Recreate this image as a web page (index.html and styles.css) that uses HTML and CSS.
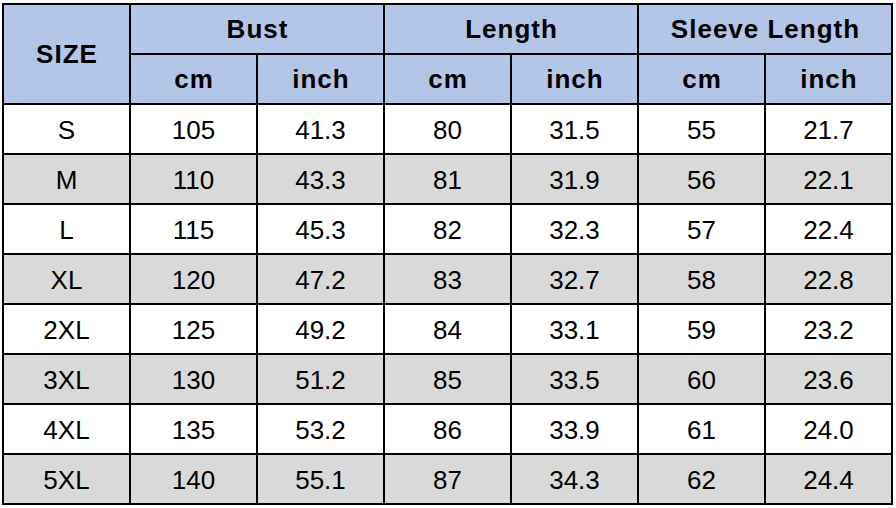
FILE: index.html
```html
<!DOCTYPE html>
<html>
<head>
<meta charset="utf-8">
<link rel="stylesheet" href="styles.css">
</head>
<body>
<div class="sheet">
  <div class="c hd size">SIZE</div>
  <div class="c hd span2">Bust</div>
  <div class="c hd span2">Length</div>
  <div class="c hd span2">Sleeve Length</div>
  <div class="c hd">cm</div><div class="c hd">inch</div>
  <div class="c hd">cm</div><div class="c hd">inch</div>
  <div class="c hd">cm</div><div class="c hd">inch</div>

  <div class="c">S</div><div class="c">105</div><div class="c">41.3</div><div class="c">80</div><div class="c">31.5</div><div class="c">55</div><div class="c">21.7</div>
  <div class="c g">M</div><div class="c g">110</div><div class="c g">43.3</div><div class="c g">81</div><div class="c g">31.9</div><div class="c g">56</div><div class="c g">22.1</div>
  <div class="c">L</div><div class="c">115</div><div class="c">45.3</div><div class="c">82</div><div class="c">32.3</div><div class="c">57</div><div class="c">22.4</div>
  <div class="c g">XL</div><div class="c g">120</div><div class="c g">47.2</div><div class="c g">83</div><div class="c g">32.7</div><div class="c g">58</div><div class="c g">22.8</div>
  <div class="c">2XL</div><div class="c">125</div><div class="c">49.2</div><div class="c">84</div><div class="c">33.1</div><div class="c">59</div><div class="c">23.2</div>
  <div class="c g">3XL</div><div class="c g">130</div><div class="c g">51.2</div><div class="c g">85</div><div class="c g">33.5</div><div class="c g">60</div><div class="c g">23.6</div>
  <div class="c">4XL</div><div class="c">135</div><div class="c">53.2</div><div class="c">86</div><div class="c">33.9</div><div class="c">61</div><div class="c">24.0</div>
  <div class="c g">5XL</div><div class="c g">140</div><div class="c g">55.1</div><div class="c g">87</div><div class="c g">34.3</div><div class="c g">62</div><div class="c g">24.4</div>
</div>
</body>
</html>
```
FILE: styles.css
```css
html, body {
  margin: 0;
  padding: 0;
  background: #fff;
}
body {
  width: 896px;
  height: 508px;
  overflow: hidden;
  font-family: "Liberation Sans", Arial, sans-serif;
}
.sheet {
  margin: 3px 0 0 2px;
  display: grid;
  grid-template-columns: repeat(7, 125px);
  grid-template-rows: repeat(10, 48px);
  gap: 2px;
  padding: 2px;
  width: max-content;
  background: #000;
}
.c {
  background: #fff;
  display: flex;
  align-items: center;
  justify-content: center;
  font-size: 26px;
  color: #000;
  padding-top: 3px;
  box-sizing: border-box;
}
.c.g {
  background: #d9d9d9;
}
.c.hd {
  background: #b4c6e7;
  font-weight: bold;
  letter-spacing: 1px;
  padding-top: 0;
  padding-left: 1px;
}
.size {
  grid-row: span 2;
}
.span2 {
  grid-column: span 2;
}
```
